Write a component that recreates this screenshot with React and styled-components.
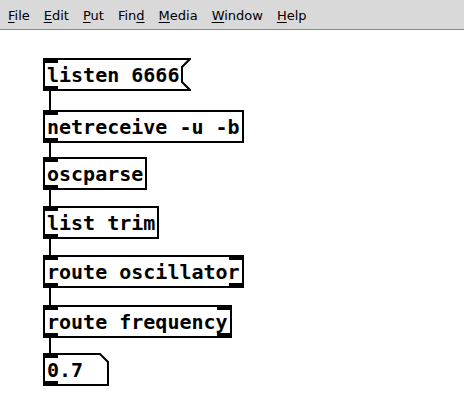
import React from 'react';
import styled, { createGlobalStyle } from 'styled-components';

const GlobalStyle = createGlobalStyle`
  html, body {
    margin: 0;
    padding: 0;
    background: #ffffff;
  }
`;

const Window = styled.div`
  width: 464px;
  height: 400px;
  background: #ffffff;
  overflow: hidden;
`;

const MenuBar = styled.div`
  display: flex;
  align-items: center;
  gap: 14px;
  height: 30px;
  padding: 1px 0 0 8px;
  box-sizing: border-box;
  background: #d9d9d9;
  border-bottom: 1px solid #8a8a8a;
  font-family: "DejaVu Sans", sans-serif;
  font-size: 13px;
  color: #000;
`;

const MenuItem = styled.span`
  u {
    text-decoration-thickness: 1px;
    text-underline-offset: 2px;
  }
`;

const Canvas = styled.div`
  display: flex;
  flex-direction: column;
  align-items: flex-start;
  padding: 28px 0 0 43px;
`;

const Wire = styled.div`
  width: 2px;
  height: ${(p) => p.$h}px;
  margin-left: 6px;
  background: #000;
`;

const textStyle = `
  font-family: "DejaVu Sans Mono", monospace;
  font-weight: bold;
  font-size: 20px;
  color: #000;
  white-space: pre;
`;

const ObjectBox = styled.div`
  position: relative;
  box-sizing: border-box;
  height: 33px;
  display: flex;
  align-items: center;
  padding: 0 2px;
  border: 2px solid #000;
  ${textStyle}
`;

const Shaped = styled.div`
  position: relative;
  display: flex;
  height: 33px;
`;

const ShapedBody = styled.div`
  box-sizing: border-box;
  height: 33px;
  display: flex;
  align-items: center;
  padding: 0 0 0 2px;
  width: ${(p) => (p.$w ? `${p.$w}px` : 'auto')};
  border: 2px solid #000;
  border-right: none;
  ${textStyle}
`;

const Port = styled.span`
  position: absolute;
  width: 15px;
  height: 5px;
  background: #000;
  ${(p) => (p.$bottom ? 'bottom: -2px;' : 'top: -2px;')}
  ${(p) => (p.$right ? 'right: -2px;' : 'left: -2px;')}
`;

const ShapedPort = styled(Port)`
  ${(p) => (p.$bottom ? 'bottom: 0;' : 'top: 0;')}
  left: 0;
`;

const menus = [
  ['F', 'ile'],
  ['E', 'dit'],
  ['P', 'ut'],
  ['Fin', 'd', ''],
  ['M', 'edia'],
  ['W', 'indow'],
  ['H', 'elp'],
];

function Menu({ item }) {
  if (item.length === 3) {
    return (
      <MenuItem>
        {item[0]}
        <u>{item[1]}</u>
      </MenuItem>
    );
  }
  return (
    <MenuItem>
      <u>{item[0]}</u>
      {item[1]}
    </MenuItem>
  );
}

function Obj({ text, twoIn, twoOut }) {
  return (
    <ObjectBox>
      {text}
      <Port />
      <Port $bottom />
      {twoIn && <Port $right />}
      {twoOut && <Port $right $bottom />}
    </ObjectBox>
  );
}

function Message({ text }) {
  return (
    <Shaped>
      <ShapedBody>{text}</ShapedBody>
      <svg width="12" height="33" viewBox="0 0 12 33">
        <path d="M0 1 H11 L3 9 V24 L11 32 H0" fill="none" stroke="#000" strokeWidth="2" />
      </svg>
      <ShapedPort />
      <ShapedPort $bottom />
    </Shaped>
  );
}

function NumberBox({ text }) {
  return (
    <Shaped>
      <ShapedBody $w={56}>{text}</ShapedBody>
      <svg width="10" height="33" viewBox="0 0 10 33">
        <path d="M0 1 H1 L9 9 V32 H0" fill="none" stroke="#000" strokeWidth="2" />
      </svg>
      <ShapedPort />
      <ShapedPort $bottom />
    </Shaped>
  );
}

export default function App() {
  return (
    <Window>
      <GlobalStyle />
      <MenuBar>
        {menus.map((m, i) => (
          <Menu key={i} item={m} />
        ))}
      </MenuBar>
      <Canvas>
        <Message text="listen 6666" />
        <Wire $h={19} />
        <Obj text="netreceive -u -b" />
        <Wire $h={14} />
        <Obj text="oscparse" />
        <Wire $h={16} />
        <Obj text="list trim" />
        <Wire $h={16} />
        <Obj text="route oscillator" twoIn twoOut />
        <Wire $h={17} />
        <Obj text="route frequency" twoIn twoOut />
        <Wire $h={15} />
        <NumberBox text="0.7" />
      </Canvas>
    </Window>
  );
}
